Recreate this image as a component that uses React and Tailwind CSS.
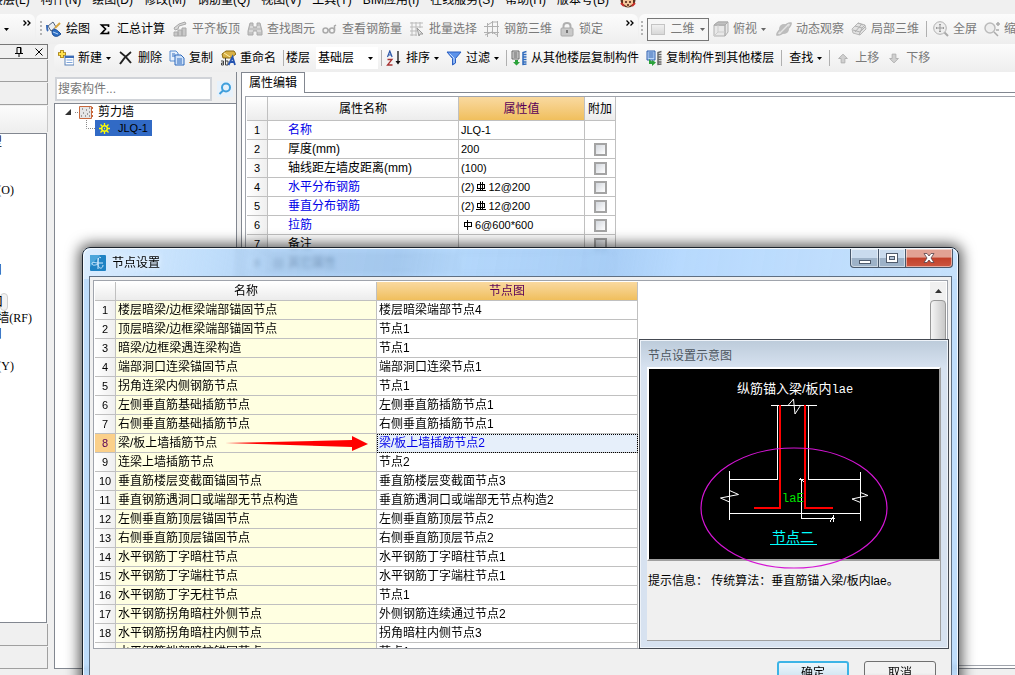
import React, { useState } from "react";

const MENUS = [
  "楼层(L)", "构件(N)", "绘图(D)", "修改(M)", "钢筋量(Q)", "视图(V)", "工具(T)",
  "BIM应用(I)", "在线服务(S)", "帮助(H)", "版本号(B)",
];

const LEFT_ROWS = [
  { t: "型", w: "w-[2px]" }, null, null, { t: "(O)", w: "w-[14px]" }, null, null, null, null,
  { t: "口", w: "w-[2px]" }, null, { t: "口", w: "w-[2px]", sel: true }, { t: "墙(RF)", w: "w-[32px]" },
  { t: "口", w: "w-[2px]" }, null, { t: "(Y)", w: "w-[14px]" },
];

const PROPS = [
  { name: "名称", value: "JLQ-1", blue: true },
  { name: "厚度(mm)", value: "200", tick: true },
  { name: "轴线距左墙皮距离(mm)", value: "(100)", tick: true },
  { name: "水平分布钢筋", pre: "(2)", bar: "ribbed", value: "12@200", blue: true, tick: true },
  { name: "垂直分布钢筋", pre: "(2)", bar: "ribbed", value: "12@200", blue: true, tick: true },
  { name: "拉筋", bar: "plain", value: "6@600*600", blue: true, tick: true },
  { name: "备注", value: "", tick: true },
  { name: "其它属性", value: "", group: true },
];

const NODES = [
  ["楼层暗梁/边框梁端部锚固节点", "楼层暗梁端部节点4"],
  ["顶层暗梁/边框梁端部锚固节点", "节点1"],
  ["暗梁/边框梁遇连梁构造", "节点1"],
  ["端部洞口连梁锚固节点", "端部洞口连梁节点1"],
  ["拐角连梁内侧钢筋节点", "节点1"],
  ["左侧垂直筋基础插筋节点", "左侧垂直筋插筋节点1"],
  ["右侧垂直筋基础插筋节点", "右侧垂直筋插筋节点1"],
  ["梁/板上墙插筋节点", "梁/板上墙插筋节点2"],
  ["连梁上墙插筋节点", "节点2"],
  ["垂直筋楼层变截面锚固节点", "垂直筋楼层变截面节点3"],
  ["垂直钢筋遇洞口或端部无节点构造", "垂直筋遇洞口或端部无节点构造2"],
  ["左侧垂直筋顶层锚固节点", "左侧垂直筋顶层节点2"],
  ["右侧垂直筋顶层锚固节点", "右侧垂直筋顶层节点2"],
  ["水平钢筋丁字暗柱节点", "水平钢筋丁字暗柱节点1"],
  ["水平钢筋丁字端柱节点", "水平钢筋丁字端柱节点1"],
  ["水平钢筋丁字无柱节点", "节点1"],
  ["水平钢筋拐角暗柱外侧节点", "外侧钢筋连续通过节点2"],
  ["水平钢筋拐角暗柱内侧节点", "拐角暗柱内侧节点3"],
  ["水平钢筋端部暗柱锚固节点", "节点1"],
];

function Svg({ children, className = "size-4" }) {
  return (
    <svg viewBox="0 0 16 16" className={`shrink-0 ${className}`} fill="none" aria-hidden="true">
      {children}
    </svg>
  );
}

const Caret = ({ gray }) => (
  <svg viewBox="0 0 5 3" className="h-[3px] w-[5px] shrink-0" aria-hidden="true">
    <path d="M0 0h5L2.500 3z" fill={gray ? "#666" : "#000"} />
  </svg>
);

const Chevrons = () => (
  <svg viewBox="0 0 8 6" className="mb-3 h-[6px] w-2 shrink-0" fill="none" stroke="#000" strokeWidth="1.300" aria-hidden="true">
    <path d="M.5.5 3 3 .5 5.500M4.500.5 7 3 4.500 5.500" />
  </svg>
);

const Grip = () => (
  <span className="mr-1 h-4 w-[2px] shrink-0 bg-[repeating-linear-gradient(#b4b4b4_0_2px,transparent_2px_4px)]" />
);

const Sep = ({ className }) => <span className={`h-4 w-px shrink-0 bg-[#b0b0b0] ${className}`} />;

const icons = {
  paint: (
    <Svg>
      <path d="M2 5l5-4 3 5-5 4z" fill="#e9eef6" stroke="#52627c" />
      <path d="M1 4c0 3 0 5 1 6" stroke="#3b6cb8" strokeWidth="2" />
      <path d="M6 10c3-3 5-1 7 1l2 2-3 2c-3 1-6 0-6-5z" fill="#2e6fc4" stroke="#1d4d94" />
      <path d="M9 7l5-5" stroke="#d7a640" strokeWidth="2" />
      <path d="M7 11l5 2" stroke="#b9d5f5" />
    </Svg>
  ),
  sigma: (
    <Svg>
      <path d="M11.500 6V4H4.500l4 4-4 4.500h7V10.500" stroke="#000" strokeWidth="1.700" />
    </Svg>
  ),
  slab: (
    <Svg>
      <path d="M2 7l5-4 6-2 1 2-7 2-1 3-3 1z" fill="#d8d8d8" stroke="#a8a8a8" />
      <path d="M2 11h4v4H2zM6 9h4v6H6zM10 7h4v8h-4z" fill="#c8c8c8" stroke="#aaa" />
    </Svg>
  ),
  binoc: (
    <Svg>
      <path d="M3 2h3v4h4V2h3l2 8v4h-5v-4H6v4H1v-4z" fill="#c4c4c4" stroke="#aaa" />
      <path d="M2 10h4M10 10h4M3 6h3M10 6h3" stroke="#eee" />
    </Svg>
  ),
  glasses: (
    <Svg>
      <circle cx="3.500" cy="9.500" r="2.500" stroke="#aaa" strokeWidth="1.500" />
      <circle cx="10" cy="9.500" r="2.500" stroke="#aaa" strokeWidth="1.500" />
      <path d="M6 9h2M12.500 9.500V5l1.500-1" stroke="#aaa" strokeWidth="1.500" />
    </Svg>
  ),
  batch: (
    <Svg>
      <path d="M1 2h13M1 6h13M1 10h7M1 14h7M3 1v14M7 1v14M11 1v6" stroke="#bbb" />
      <path d="M8 7l6 6-3 0-1 2z" fill="#ddd" stroke="#999" />
    </Svg>
  ),
  grid3: (
    <Svg>
      <path d="M0 5.500h15M0 11.500h15M3.500 2v14M8.500 0v13M13.500 0v16M3.500 4l5-3 5 0M1 14l7-3 5 3" stroke="#b0b0b0" />
    </Svg>
  ),
  lock: (
    <Svg>
      <path d="M4.500 7V5c0-4 7-4 7 0v2" stroke="#b0b0b0" strokeWidth="2" />
      <rect x="2" y="7" width="12" height="8" rx="1" fill="#c9c9c9" stroke="#aaa" />
      <path d="M8 9v3" stroke="#777" strokeWidth="2" />
    </Svg>
  ),
  cube: (
    <Svg>
      <path d="M1 4l4-3h10l-3 3zM1 4h11v11H1zM12 4l3-3v10l-3 4z" fill="#e8e8e8" stroke="#b0b0b0" />
      <path d="M1 4l4-3h10l-3 3z" fill="#c0c0c0" stroke="#aaa" />
      <path d="M5 4v7h7M5 11l-4 4" stroke="#ccc" />
    </Svg>
  ),
  orbit: (
    <Svg>
      <path d="M1 14c-1-3 10-13 14-12 1 3-9 13-14 12z" stroke="#b8b8b8" strokeWidth="1.500" fill="#d8d8d8" />
      <circle cx="8" cy="8" r="5" fill="#bdbdbd" />
      <path d="M3 13L13 3" stroke="#e4e4e4" strokeWidth="1.500" />
    </Svg>
  ),
  local: (
    <Svg>
      <path d="M1 8l6-6 7 2 1 4-6 6-7-2z" fill="#e2e2e2" stroke="#b8b8b8" />
      <path d="M4 5l7 2-3 7M7 2l5 2M11 7l3-3M4 11l6-7M2 9l7 2 5-5" stroke="#b0b0b0" />
    </Svg>
  ),
  full: (
    <Svg>
      <circle cx="7" cy="7" r="6.300" fill="#eee" stroke="#b0b0b0" />
      <path d="M7 3v8M3 7h8M6 4l1-1 1 1M6 10l1 1 1-1M4 6L3 7l1 1M10 6l1 1-1 1" stroke="#999" />
      <path d="M11.500 11.500l3.500 3.500" stroke="#aaa" strokeWidth="2" />
    </Svg>
  ),
  zoom: (
    <Svg>
      <circle cx="6" cy="7" r="5" fill="#eee" stroke="#bbb" strokeWidth="1.500" />
      <path d="M10 11l4 4M12 3h4M14 1v4M12 9h3" stroke="#aaa" strokeWidth="1.500" />
    </Svg>
  ),
  add: (
    <Svg>
      <path d="M4 0v8M0 4h8" stroke="#a07808" strokeWidth="3.600" />
      <path d="M4 .8v6.400M.8 4h6.400" stroke="#ffe14d" strokeWidth="2" />
      <rect x="7" y="6" width="9" height="9" fill="#fff" stroke="#5b82b8" />
      <path d="M7 7h9" stroke="#3b6cb8" strokeWidth="2" />
      <path d="M8.500 10h6M8.500 12.500h6" stroke="#7fa6dc" />
    </Svg>
  ),
  del: (
    <Svg>
      <path d="M2 2c3 2 8 7 11 11M13 2C9 5 5 9 2 14" stroke="#222" strokeWidth="1.900" />
    </Svg>
  ),
  copy: (
    <Svg>
      <path d="M1 1h6l2 2v8H1z" fill="#e6f0fc" stroke="#5b8ed0" />
      <path d="M6 5h6l3 3v7H6z" fill="#cfe1f8" stroke="#2f6bbd" />
      <path d="M3 4h3M3 6h3M8 9h5M8 11h5M8 13h5" stroke="#2f6bbd" />
    </Svg>
  ),
  rename: (
    <Svg>
      <path d="M2 4l4-3h8l2 3-5 4H7L3 8z" fill="#d8b146" stroke="#8a6a14" />
      <path d="M4 3l6 4" stroke="#fff1b0" />
      <path d="M1 11h2.500v4H1.500v-2h2M5.500 8v7h2.500v-4H6" stroke="#444" />
      <path d="M8.500 15l4-8 2.500 8M10 12h4" stroke="#2554b0" strokeWidth="1.800" />
    </Svg>
  ),
  sort: (
    <Svg>
      <path d="M1.500 7l2.300-6 2.300 6M2.500 5h3" stroke="#2c57a8" strokeWidth="1.200" />
      <path d="M1.500 9.500H6L1.500 15H6.500" stroke="#a83232" strokeWidth="1.300" />
      <path d="M12 1v12" stroke="#111" strokeWidth="1.300" />
      <path d="M9.500 11h5L12 14.500z" fill="#111" />
    </Svg>
  ),
  filter: (
    <Svg>
      <path d="M1 2h14L9.500 8.500V13l-3 2V8.500z" fill="#5d93ea" stroke="#2b5fc0" />
      <path d="M3.500 3.500L8 8v5" stroke="#c4dcff" />
    </Svg>
  ),
  fromFloor: (
    <Svg>
      <path d="M1 1h7v8H1z" fill="#ddd" stroke="#666" />
      <path d="M2.500 3h4M2.500 5h4M2.500 7h4" stroke="#555" />
      <path d="M15.500 1.500l-3.500 1v12l3.500-.5M12 4.500h3.500M12 7h3.500M12 9.500h3.500M12 12h3.500" stroke="#2f6bbd" strokeWidth="1.500" />
      <path d="M4 10v2H2l3.500 3.500L9 12H7v-2z" fill="#2ca23b" />
    </Svg>
  ),
  toFloor: (
    <Svg>
      <path d="M1 1h8v9H1z" fill="#b9d4f7" stroke="#2f5fae" />
      <path d="M2.500 3h5M2.500 5h5M2.500 7h5" stroke="#2f5fae" />
      <path d="M15.500 1.500l-3.500 1v12l3.500-.5M12 4.500h3.500M12 7h3.500M12 9.500h3.500M12 12h3.500" stroke="#666" strokeWidth="1.500" />
      <path d="M3 9v5h3v2l4-3.500L6 10v1.500z" fill="#2ca23b" />
    </Svg>
  ),
  up: (
    <Svg className="h-[11px] w-[10px]">
      <path d="M8 1l7 7h-4v7H5V8H1z" fill="#d0d0d0" stroke="#b0b0b0" strokeWidth="1.500" />
    </Svg>
  ),
  down: (
    <Svg className="h-[11px] w-[10px]">
      <path d="M8 15l7-7h-4V1H5v7H1z" fill="#d0d0d0" stroke="#b0b0b0" strokeWidth="1.500" />
    </Svg>
  ),
};

function Item({ icon, label, off, caret, className = "mr-[7px]" }) {
  return (
    <button type="button" className={`flex shrink-0 items-center gap-1 ${off ? "text-[#7a7a7a]" : "text-black"} ${className}`}>
      {icon && icons[icon]}
      <span>{label}</span>
      {caret && <Caret gray={off} />}
    </button>
  );
}

function Th({ children, hot }) {
  return (
    <th
      scope="col"
      className={`border-r border-b border-[#c0c0c0] p-0 font-normal ${
        hot
          ? "bg-linear-to-b from-[#f9d99f] to-[#f0bf5c] text-[#590058]"
          : "bg-linear-to-b from-white to-[#ececec]"
      }`}
    >
      {children}
    </th>
  );
}

const cell = "h-[19px] overflow-hidden border-r border-b border-[#c0c0c0] p-0 leading-[18px] whitespace-nowrap";

function BarMark({ kind }) {
  return (
    <svg viewBox="0 0 10 10" className="mx-[2px] h-[10px] w-[10px] shrink-0" fill="none" stroke="#000" shapeRendering="crispEdges" aria-hidden="true">
      <path d={kind === "ribbed" ? "M1.500 2.500h7v4h-7zM4.500 0v9M6.500 0v9M0 8.500h10" : "M1.500 2.500h7v4h-7zM4.500 0v10"} />
    </svg>
  );
}

function PropertyTable() {
  return (
    <table className="table-fixed border-separate border-spacing-0 text-left">
      <colgroup>
        <col className="w-[21px]" />
        <col className="w-[191px]" />
        <col className="w-[126px]" />
        <col className="w-[31px]" />
      </colgroup>
      <thead>
        <tr className="h-6 text-center">
          <Th />
          <Th>属性名称</Th>
          <Th hot>属性值</Th>
          <Th>附加</Th>
        </tr>
      </thead>
      <tbody>
        {PROPS.map(({ name, pre, bar, value, blue, tick, group }, i) => (
          <tr key={name}>
            <td className={`${cell} bg-linear-to-r from-white to-[#efefef] text-center text-[11px]`}>{i + 1}</td>
            <td className={`${cell} ${group ? "bg-[#e4e4e4] pl-[6px]" : "pl-5"} ${blue ? "text-[#0000e8]" : ""}`}>
              <span className="flex items-center gap-[5px]">
                {group && (
                  <svg viewBox="0 0 9 9" className="size-[9px]" fill="none" stroke="#333" aria-hidden="true">
                    <path d="M.5.5h8v8h-8zM2 4.500h5M4.500 2v5" />
                  </svg>
                )}
                {name}
              </span>
            </td>
            <td className={`${cell} pl-[2px] text-[11px]`}>
              <span className="flex items-center">
                {pre}
                {bar && <BarMark kind={bar} />}
                {value}
              </span>
            </td>
            <td className={`${cell} text-center`}>
              {tick && (
                <input
                  type="checkbox"
                  aria-label={`${name} 附加`}
                  className="mx-auto block size-[13px] appearance-none border-2 border-[#a4a4a4] bg-linear-to-br from-[#d4d8de] to-white"
                />
              )}
            </td>
          </tr>
        ))}
      </tbody>
    </table>
  );
}

function NodeTable() {
  return (
    <table className="table-fixed border-separate border-spacing-0 text-left">
      <colgroup>
        <col className="w-[21px]" />
        <col className="w-[261px]" />
        <col className="w-[261px]" />
      </colgroup>
      <thead>
        <tr className="h-[19px] text-center leading-[18px]">
          <Th />
          <Th>名称</Th>
          <Th hot>节点图</Th>
        </tr>
      </thead>
      <tbody>
        {NODES.map(([name, value], i) => {
          const sel = i === 7;
          return (
            <tr key={name}>
              <td className={`${cell} text-center text-[11px] ${sel ? "bg-[#fbd08a] text-[#590058]" : "bg-linear-to-r from-white to-[#efefef]"}`}>
                {i < 18 ? i + 1 : ""}
              </td>
              <td className={`${cell} bg-[#ffffe1] pl-[2px]`}>
                {sel ? (
                  <span className="flex items-center gap-2">
                    {name}
                    <svg viewBox="0 0 143 18" className="h-[18px] w-[143px] shrink-0" aria-hidden="true">
                      <path d="M0 9l127-3V2l16 8-16 7v-4z" fill="#f00" />
                    </svg>
                  </span>
                ) : (
                  name
                )}
              </td>
              <td className={`${cell} pl-[2px] ${sel ? "bg-[#e6effa] text-[#0000e8] outline-1 -outline-offset-1 outline-dotted outline-black" : ""}`}>
                {value}
              </td>
            </tr>
          );
        })}
      </tbody>
    </table>
  );
}

function NodeDrawing() {
  return (
    <svg viewBox="0 0 290 190" className="relative block h-[190px] w-full overflow-visible" fill="none" role="img" aria-label="节点二">
      <g stroke="#fff" shapeRendering="crispEdges">
        <path d="M122 36.500h46M128.500 36v74.500h-48M159.500 36v74.500h52M80.500 102v49M211.500 103v49M80.500 144.500h131" />
        <path d="M152.500 110v39.500h33M150 110.500h6M151 109l5 5M181 153l4-7M184.500 146v7" />
      </g>
      <path
        stroke="#fff"
        d="M139 36.500l5.500-6.500 1.500 15 5.500-8.500M80.500 121.500l9 4-18 3.500 9 4M211.500 123.500l7.500 3-16 3.500 8.500 3.500"
      />
      <path d="M131 36v103h-26M156 36v103h28" stroke="#f00" strokeWidth="2" />
      <text x="88" y="24" fill="#fff" className="text-[13px]">
        纵筋锚入梁/板内<tspan className="font-['Liberation_Mono'] text-[12px]">lae</tspan>
      </text>
      <text x="133" y="133" fill="#00e000" className="font-['Liberation_Mono'] text-[12px]">laE</text>
      <text x="123" y="173" fill="#0ff" className="text-[14px]">节点二</text>
      <path d="M121 175.500h47" stroke="#0ff" />
      <ellipse cx="145" cy="139" rx="93" ry="60" stroke="#d415d4" strokeWidth="1.200" />
    </svg>
  );
}

function CaptionButton({ label, className, children }) {
  return (
    <button
      type="button"
      aria-label={label}
      className={`flex h-[19px] items-center justify-center border border-t-0 border-[#48586c] shadow-[inset_0_0_0_1px_rgba(255,255,255,0.5)] ${className}`}
    >
      {children}
    </button>
  );
}

const glass = "bg-linear-to-b from-[#c9dbee] from-50% to-[#9db2c8] to-50%";

function NodeDialog() {
  return (
    <section
      role="dialog"
      aria-labelledby="dlg"
      className="absolute top-[247px] right-14 left-[82px] overflow-hidden rounded-t-lg border border-[#1c232c] bg-[#a4cffa]/70 shadow-[0_0_14px_3px_rgba(0,0,0,0.65)] backdrop-blur-[2px]"
    >
      <div className="rounded-t-lg border-x border-t border-white/80 bg-[linear-gradient(100deg,rgba(225,240,255,0.8)_0,rgba(195,224,252,0.5)_14%,rgba(140,180,225,0.25)_22%,rgba(120,170,225,0.3)_36%,rgba(165,208,252,0.4)_42%,rgba(145,190,240,0.5)_60%,rgba(180,216,255,0.7)_68%,rgba(200,226,252,0.8)_100%)] bg-[length:100%_30px] bg-no-repeat px-[5px]">
        <header className="flex h-[27px] items-start">
          <h2 id="dlg" className="flex flex-1 items-center gap-[6px] self-center pl-px text-[12px] text-black">
            <svg viewBox="0 0 16 16" className="size-4" fill="none" aria-hidden="true">
              <rect width="16" height="16" rx="1" fill="#1f83c4" />
              <path d="M0 0h10L0 12z" fill="#4aa5da" />
              <path d="M11 3c-2-2-3 0-3 5 0 7 5 6 5 2M2 9c0-3 3-1 6-1h5M8 3v11M2 9c1 2 4 1 6 0" stroke="#cfeaff" />
            </svg>
            <span className="[text-shadow:0_0_6px_#fff]">节点设置</span>
          </h2>
          <div className="-mr-px flex">
            <CaptionButton label="最小化" className={`w-[29px] rounded-bl-[4px] ${glass}`}>
              <span className="mt-2 h-1 w-3 border border-[#4f5b6c] bg-white" />
            </CaptionButton>
            <CaptionButton label="最大化" className={`-ml-px w-[28px] ${glass}`}>
              <span className="flex h-[10px] w-3 items-center justify-center border border-[#4f5b6c] bg-white">
                <span className="h-1 w-[6px] border border-[#4f5b6c] bg-[#b5c5d8]" />
              </span>
            </CaptionButton>
            <CaptionButton label="关闭" className="-ml-px w-[48px] rounded-br-[4px] bg-linear-to-b from-[#e2a294] from-45% via-[#c2402a] via-50% to-[#cc5640]">
              <svg viewBox="0 0 12 10" className="h-[10px] w-3" aria-hidden="true">
                <path d="M1 .5h3l2 2.500 2-2.500h3L8 5l3 4.500H8L6 7 4 9.500H1L4 5z" fill="#fff" stroke="#58414a" strokeWidth=".8" />
              </svg>
            </CaptionButton>
          </div>
        </header>
        <div className="relative border border-b-0 border-[#5f6f82] bg-[#f0f0f0] px-[3px] pt-[3px]">
          <div className="flex h-[369px] items-start justify-between overflow-hidden border border-[#a0a4ac] bg-white pt-px pr-px pl-px">
            <NodeTable />
            <div className="flex h-full w-4 flex-col bg-[#f0f0f0]">
              <span className="flex h-[18px] items-center justify-center">
                <svg viewBox="0 0 7 4" className="h-1 w-[7px]" aria-hidden="true">
                  <path d="M3.500 0L7 4H0z" fill="#333" />
                </svg>
              </span>
              <span className="h-[90px] rounded-sm border border-[#979797] bg-linear-to-r from-[#f5f5f5] to-[#c8c8c8]" />
            </div>
          </div>
          <div className="flex h-[64px] justify-end gap-[15px] pt-3 pr-3">
            <button type="button" className="h-[23px] w-[72px] rounded-[3px] border-2 border-[#3cb4e6] bg-linear-to-b from-[#eef6fb] to-[#c6dfee] leading-[18px]">
              确定
            </button>
            <button type="button" className="h-[23px] w-[72px] rounded-[3px] border border-[#707070] bg-linear-to-b from-[#f2f2f2] from-50% to-[#d4d4d4] leading-5">
              取消
            </button>
          </div>
          <aside className="absolute top-[62px] right-[2px] w-[310px] border border-[#454a52] bg-linear-to-b from-[#bccbda] to-[#d7e2f0] to-[28px] px-[7px] pb-[7px] shadow-[inset_0_0_0_1px_#eef3f9]">
            <h3 className="flex h-[27px] items-center pt-1 pl-px text-[12px] text-[#4d565f]">节点设置示意图</h3>
            <div className="relative z-10 border-2 border-t-white border-r-[#a0a0a0] border-b-[#a0a0a0] border-l-white bg-black">
              <NodeDrawing />
            </div>
            <p className="h-20 border-r border-b border-[#a0a0a0] bg-[#f0f0f0] pt-3 pl-px">
              提示信息： 传统算法：垂直筋锚入梁/板内lae。
            </p>
          </aside>
        </div>
      </div>
    </section>
  );
}

export default function App() {
  const [query, setQuery] = useState("");
  const bar = "flex items-center overflow-hidden bg-linear-to-b from-[#fcfcfc] to-[#eeeeee]";
  return (
    <div className="relative flex h-screen flex-col overflow-hidden bg-[#f0f0f0] font-['Liberation_Sans','Noto_Sans_CJK_SC',sans-serif] text-[12px] leading-4 text-black">
      <nav className="flex h-[14px] shrink-0 items-end overflow-hidden pb-[6px]">
        <div className="-ml-[9px] flex shrink-0 items-center gap-[11px]">
          {MENUS.map((m) => (
            <a key={m} href="#" className="whitespace-nowrap">{m}</a>
          ))}
          <svg viewBox="0 0 16 16" className="size-4" aria-hidden="true">
            <circle cx="8" cy="8" r="7.500" fill="#5a3420" />
            <path d="M3 8h10v4l-5 3-5-3z" fill="#f4c79b" />
            <path d="M5 10h2M9 10h2M7 13h2" stroke="#4a1d12" strokeWidth="1.500" />
            <path d="M1 11l3 3M15 11l-3 3" stroke="#c9302c" strokeWidth="2" />
          </svg>
        </div>
      </nav>

      <div className="flex h-[30px] shrink-0 gap-px overflow-hidden">
        <div className={`${bar} w-[35px] gap-[14px] rounded-r-md pl-1`}>
          <Caret />
          <Chevrons />
        </div>
        <div className={`${bar} w-[602px] rounded-md pr-1 pl-1`}>
          <Grip />
          <Item icon="paint" label="绘图" />
          <Item icon="sigma" label="汇总计算" />
          <Item icon="slab" label="平齐板顶" off />
          <Item icon="binoc" label="查找图元" off />
          <Item icon="glasses" label="查看钢筋量" off />
          <Item icon="batch" label="批量选择" off />
          <Item icon="grid3" label="钢筋三维" off />
          <Item icon="lock" label="锁定" off />
          <span className="ml-auto flex"><Chevrons /></span>
        </div>
        <div className={`${bar} flex-1 rounded-l-md pl-[2px]`}>
          <Grip />
          <button type="button" className="mr-1 flex h-[23px] w-[62px] shrink-0 items-center justify-between border border-[#777] bg-[#f6f6f6] px-[3px] text-[#7a7a7a]">
            <span className="h-[11px] w-[14px] border border-[#c4c4c4] bg-linear-to-b from-[#f0f0f0] to-[#d8d8d8]" />
            二维
            <Caret gray />
          </button>
          <Item icon="cube" label="俯视" off caret className="mr-[10px]" />
          <Item icon="orbit" label="动态观察" off />
          <Item icon="local" label="局部三维" off />
          <Sep className="mr-[6px]" />
          <Item icon="full" label="全屏" off />
          <Item icon="zoom" label="缩放" off />
        </div>
      </div>

      <div className="flex min-h-0 flex-1 gap-[6px]">
        <aside className="flex w-12 shrink-0 flex-col gap-px pb-[6px]">
          <div className="flex h-[15px] items-center justify-end gap-3 border border-l-0 border-[#777] pr-1">
            <svg viewBox="0 0 8 10" className="h-[10px] w-2" fill="none" stroke="#000" aria-label="固定">
              <path d="M2 6V.5h4V6M5.500 1v5M0 6.500h8M4 7v3" />
            </svg>
            <svg viewBox="0 0 8 8" className="size-2" stroke="#000" aria-label="关闭">
              <path d="M.5.5l7 7M7.500.5l-7 7" />
            </svg>
          </div>
          <div className="h-[22px] border-r border-b border-[#a0a0a0]" />
          <div className="h-[22px] border-r border-b border-[#a0a0a0]" />
          <div className="h-[26px] border-r border-[#c8c8c8] bg-linear-to-b from-[#fcfcfc] to-[#eee]" />
          <div className="mr-px min-h-0 flex-1 overflow-hidden border-t border-r border-b border-[#828790] bg-white font-['Liberation_Serif','Noto_Sans_CJK_SC',serif]">
            {LEFT_ROWS.map((r, i) => (
              <div key={i} className="flex h-4 items-center">
                {r && (
                  <span className={`flex shrink-0 justify-end whitespace-nowrap ${r.w} ${r.sel ? "mr-1 box-content rounded-sm border border-[#d0d0d0] bg-[#f2f2f2] pr-1" : ""}`}>
                    {r.t}
                  </span>
                )}
              </div>
            ))}
          </div>
          <div className="h-[22px] border-r border-b border-[#a0a0a0]" />
          <div className="h-[22px] border-r border-b border-[#a0a0a0]" />
        </aside>

        <div className="flex min-w-0 flex-1 flex-col">
          <div className={`${bar} h-7 shrink-0 rounded-l-md pl-1`}>
            <Item icon="add" label="新建" caret />
            <Item icon="del" label="删除" />
            <Item icon="copy" label="复制" />
            <Item icon="rename" label="重命名" />
            <Sep className="mr-[2px]" />
            <label htmlFor="floor" className="mr-[6px] shrink-0">楼层</label>
            <span className="mr-[3px] flex h-[22px] w-[62px] shrink-0 items-center bg-white pr-[5px] pl-[2px]">
              <select id="floor" className="w-full appearance-none bg-transparent outline-none">
                <option>基础层</option>
              </select>
              <Caret />
            </span>
            <Sep className="mr-1" />
            <Item icon="sort" label="排序" caret />
            <Item icon="filter" label="过滤" caret />
            <Sep className="mr-1" />
            <Item icon="fromFloor" label="从其他楼层复制构件" />
            <Item icon="toFloor" label="复制构件到其他楼层" />
            <Sep className="mr-[7px]" />
            <Item label="查找" caret />
            <Sep className="mr-2" />
            <Item icon="up" label="上移" off className="mr-[10px] gap-[7px]" />
            <Item icon="down" label="下移" off className="gap-[7px]" />
          </div>

          <div className="flex min-h-0 flex-1 gap-1">
            <aside className="flex w-[183px] shrink-0 flex-col border-r border-[#828790] pt-[5px]">
              <div className="mb-[2px] flex h-6 items-center gap-[5px]">
                <input
                  aria-label="搜索构件"
                  placeholder="搜索构件..."
                  value={query}
                  onChange={(e) => setQuery(e.target.value)}
                  className="ml-px h-6 w-[157px] border-2 border-[#d0d3d8] bg-white px-px outline-none placeholder:text-[#777]"
                />
                <button type="button" aria-label="搜索" className="flex size-4 items-center justify-center bg-[#e6f1fb]">
                  <svg viewBox="0 0 14 14" className="size-[14px]" fill="none" stroke="#3f9fdc" strokeWidth="2" aria-hidden="true">
                    <circle cx="8" cy="5.500" r="4" />
                    <path d="M5 8.500L1.500 12" />
                  </svg>
                </button>
              </div>
              <div className="mb-[6px] flex-1 border border-r-0 border-[#828790] bg-white pl-[10px]">
                <div className="flex h-4 items-center">
                  <svg viewBox="0 0 32 16" className="mr-px h-4 w-8" fill="none" aria-hidden="true">
                    <path d="M6 5v6H0z" fill="#333" />
                    <path d="M10 8.500h4" stroke="#888" strokeDasharray="1 1" />
                    <path d="M14.500 2.500h12v12h-12z" fill="#e6e6e6" stroke="#c8683c" />
                    <path d="M17 5h1M21 6h1M24 4h1M18 9h1M22 10h1M16 12h1M20 12h1M24 8h1M24 12h1" stroke="#555" />
                    <path d="M26 4h2M26 8h2M26 12h2" stroke="#c8683c" strokeWidth="2" />
                  </svg>
                  剪力墙
                </div>
                <div className="flex h-4 items-center pl-[21px]">
                  <svg viewBox="0 0 9 16" className="h-4 w-[9px]" fill="none" stroke="#888" strokeDasharray="1 1" aria-hidden="true">
                    <path d="M.5 0v8.500H9" />
                  </svg>
                  <span className="flex h-4 items-center gap-2 bg-[#316ac5] pr-1 pl-1 text-[11px]">
                    <svg viewBox="0 0 11 11" className="size-[11px]" fill="none" aria-hidden="true">
                      <circle cx="5.500" cy="5.500" r="2.800" stroke="#ff0" strokeWidth="1.500" />
                      <path d="M5.500 0v2M5.500 9v2M0 5.500h2M9 5.500h2M1.500 1.500l1.500 1.500M8 8l1.500 1.500M9.500 1.500L8 3M3 8L1.500 9.500M5 5.500h1" stroke="#ff0" strokeWidth="1.300" />
                    </svg>
                    JLQ-1
                  </span>
                </div>
              </div>
            </aside>

            <main className="flex min-w-0 flex-1 flex-col border-l border-[#828790] pb-[6px]">
              <div className="flex h-[21px] shrink-0 bg-white">
                <button type="button" className="w-[63px] border-t border-r border-[#828790] bg-white">属性编辑</button>
                <span className="flex-1 border-b border-[#828790]" />
              </div>
              <div className="flex min-h-0 flex-1 flex-col overflow-hidden border-b border-[#828790] bg-white pt-[3px] pb-[2px] pl-[3px]">
                <div className="min-h-0 flex-1 overflow-hidden border-t border-b border-l border-[#a0a4ac] pl-px">
                  <PropertyTable />
                </div>
              </div>
            </main>
          </div>
        </div>
      </div>

      <NodeDialog />
    </div>
  );
}
